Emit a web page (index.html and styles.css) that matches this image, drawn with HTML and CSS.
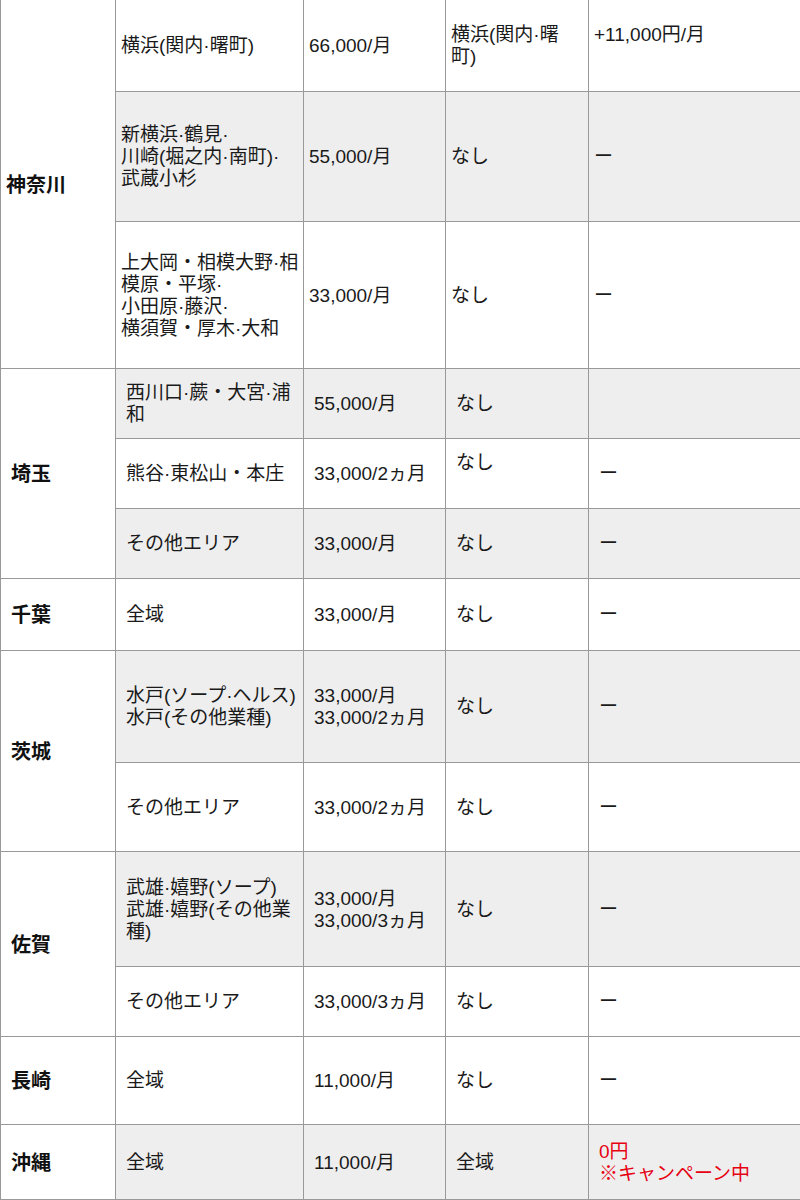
FILE: index.html
```html
<!DOCTYPE html>
<html lang="ja">
<head>
<meta charset="utf-8">
<title>エリア別料金</title>
<link rel="stylesheet" href="styles.css">
</head>
<body>
<table class="fee-table">
  <colgroup>
    <col class="c-pref">
    <col class="c-area">
    <col class="c-fee">
    <col class="c-extra">
    <col class="c-note">
  </colgroup>
  <tbody>
    <tr class="compact h1">
      <th class="pref" rowspan="3">神奈川</th>
      <td class="nowrap">横浜(関内·曙町)</td>
      <td>66,000/月</td>
      <td class="nowrap">横浜(関内·曙<br>町)</td>
      <td>+11,000円/月<br>&nbsp;</td>
    </tr>
    <tr class="compact shade h2">
      <td class="nowrap">新横浜·鶴見·<br>川崎(堀之内·南町)·<br>武蔵小杉</td>
      <td>55,000/月</td>
      <td>なし</td>
      <td>ー</td>
    </tr>
    <tr class="compact h3">
      <td class="nowrap">上大岡・相模大野·相<br>模原・平塚·<br>小田原·藤沢·<br>横須賀・厚木·大和</td>
      <td>33,000/月</td>
      <td>なし</td>
      <td>ー</td>
    </tr>
    <tr class="shade h4">
      <th class="pref" rowspan="3">埼玉</th>
      <td class="nowrap">西川口·蕨・大宮·浦<br>和</td>
      <td>55,000/月</td>
      <td>なし</td>
      <td></td>
    </tr>
    <tr class="h5">
      <td>熊谷·東松山・本庄</td>
      <td>33,000/2ヵ月</td>
      <td>なし<br>&nbsp;</td>
      <td>ー</td>
    </tr>
    <tr class="shade h6">
      <td>その他エリア</td>
      <td>33,000/月</td>
      <td>なし</td>
      <td>ー</td>
    </tr>
    <tr class="h7">
      <th class="pref">千葉</th>
      <td>全域</td>
      <td>33,000/月</td>
      <td>なし</td>
      <td>ー</td>
    </tr>
    <tr class="shade h8">
      <th class="pref" rowspan="2">茨城</th>
      <td class="nowrap">水戸(ソープ·ヘルス)<br>水戸(その他業種)</td>
      <td class="nowrap">33,000/月<br>33,000/2ヵ月</td>
      <td>なし</td>
      <td>ー</td>
    </tr>
    <tr class="h9">
      <td>その他エリア</td>
      <td>33,000/2ヵ月</td>
      <td>なし</td>
      <td>ー</td>
    </tr>
    <tr class="shade h10">
      <th class="pref" rowspan="2">佐賀</th>
      <td class="nowrap">武雄·嬉野(ソープ)<br>武雄·嬉野(その他業<br>種)</td>
      <td class="nowrap">33,000/月<br>33,000/3ヵ月</td>
      <td>なし</td>
      <td>ー</td>
    </tr>
    <tr class="h11">
      <td>その他エリア</td>
      <td>33,000/3ヵ月</td>
      <td>なし</td>
      <td>ー</td>
    </tr>
    <tr class="h12">
      <th class="pref">長崎</th>
      <td>全域</td>
      <td>11,000/月</td>
      <td>なし</td>
      <td>ー</td>
    </tr>
    <tr class="shade h13">
      <th class="pref">沖縄</th>
      <td>全域</td>
      <td>11,000/月</td>
      <td>全域</td>
      <td class="campaign">0円<br>※キャンペーン中</td>
    </tr>
  </tbody>
</table>
</body>
</html>
```

FILE: styles.css
```css
html, body {
  margin: 0;
  padding: 0;
  background: #fff;
}

body {
  font-family: "Liberation Sans", "Noto Sans CJK JP", sans-serif;
  font-size: 19px;
  line-height: 22px;
  color: #1a1a1a;
}

.fee-table {
  width: 800px;
  border-collapse: collapse;
  table-layout: fixed;
}

.c-pref { width: 115px; }
.c-area { width: 188px; }
.c-fee { width: 142px; }
.c-extra { width: 143px; }
.c-note { width: 212px; }

.fee-table th,
.fee-table td {
  border: 1px solid #999;
  padding: 2px 10px 0;
  vertical-align: middle;
  text-align: left;
  font-weight: normal;
  background: #fff;
}

.fee-table tr:first-child > th,
.fee-table tr:first-child > td {
  border-top: 0;
}

.fee-table td:last-child {
  border-right: 0;
}

.fee-table .pref {
  font-weight: bold;
  font-size: 20px;
  color: #111;
  background: #fff;
}

.fee-table .shade td {
  background: #eee;
}

.fee-table .compact td,
.fee-table .compact th {
  padding: 2px 5px 0;
}

.nowrap {
  white-space: nowrap;
}

.fee-table .campaign {
  color: #e60012;
}

.h1 { height: 91px; }
.h2 { height: 130px; }
.h3 { height: 147px; }
.h4 { height: 70px; }
.h5 { height: 70px; }
.h6 { height: 70px; }
.h7 { height: 72px; }
.h8 { height: 112px; }
.h9 { height: 89px; }
.h10 { height: 115px; }
.h11 { height: 70px; }
.h12 { height: 88px; }
.h13 { height: 75px; }
```
